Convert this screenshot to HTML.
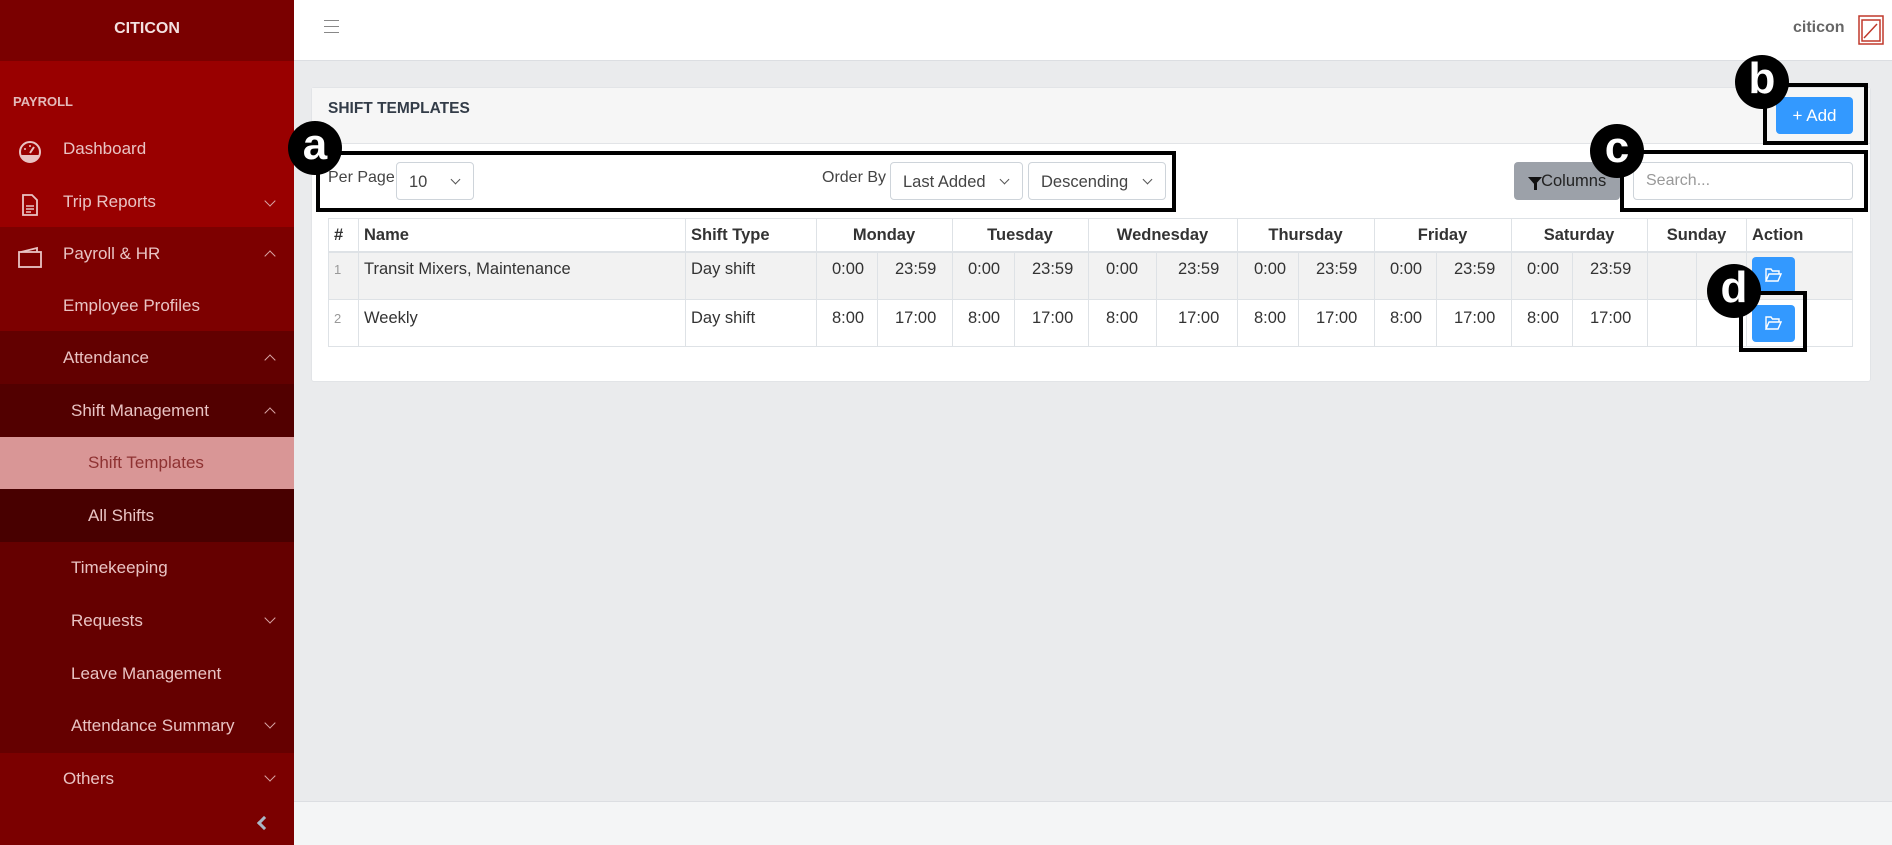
<!DOCTYPE html>
<html><head><meta charset="utf-8"><style>
*{box-sizing:border-box;margin:0;padding:0}
body{width:1892px;height:845px;overflow:hidden;background:#eaebed;font-family:"Liberation Sans",sans-serif;position:relative}
.abs{position:absolute}
#sb{left:0;top:0;width:294px;height:845px;background:#7b0000}
.band{position:absolute;left:0;width:294px}
.it{position:absolute;color:#e9c3c3;font-size:17px;line-height:20px;white-space:nowrap}
.chev{position:absolute;left:266px;width:8px;height:8px;border-left:1.3px solid #d9a6a6;border-bottom:1.3px solid #d9a6a6}
.dn{transform:rotate(-45deg)}
.up{transform:rotate(135deg)}
.th,.td{position:absolute;font-size:16.5px;color:#333;white-space:nowrap}
.th{font-weight:bold;color:#333}
.sel{position:absolute;border:1px solid #ced4da;border-radius:4px;background:#fff;font-size:16.5px;color:#444;padding:10px 12px;height:38px;line-height:18px}
.sel:after{content:"";position:absolute;right:14px;top:13px;width:6px;height:6px;border-right:1.4px solid #555;border-bottom:1.4px solid #555;transform:rotate(45deg)}
.box{position:absolute;border:4.5px solid #000}
.circ{position:absolute;width:54px;height:54px;border-radius:50%;background:#000;color:#fff;font-weight:bold;font-size:44px;line-height:48px;text-align:center}
.vl{position:absolute;width:1px;background:#dee2e6}
.hl{position:absolute;height:1px;background:#dee2e6}
.ab{position:absolute;width:43px;height:37px;background:#3399ff;border-radius:4px}
</style></head><body>
<div id="sb" class="abs">
 <div class="band" style="top:0;height:61px;background:#7a0000"></div>
 <div class="band" style="top:61px;height:166px;background:#990000"></div>
 <div class="band" style="top:227px;height:104px;background:#7d0000"></div>
 <div class="band" style="top:331px;height:53px;background:#620000"></div>
 <div class="band" style="top:384px;height:53px;background:#520000"></div>
 <div class="band" style="top:437px;height:52px;background:#d99696"></div>
 <div class="band" style="top:489px;height:53px;background:#480000"></div>
 <div class="band" style="top:542px;height:211px;background:#650000"></div>
 <div class="band" style="top:753px;height:92px;background:#7b0000"></div>
 <div class="it" style="left:0;width:294px;text-align:center;top:19px;font-weight:bold;color:#f3e0e0;font-size:16px">CITICON</div>
 <div class="it" style="left:13px;top:92px;font-weight:bold;font-size:13px;color:#e3baba">PAYROLL</div>
 <svg class="abs" style="left:18px;top:140px" width="24" height="24" viewBox="0 0 24 24"><circle cx="12" cy="12" r="10" fill="none" stroke="#e9c3c3" stroke-width="2"/><path d="M3 15h18v1a10 10 0 0 1-18 0z" fill="#e9c3c3"/><path d="M12 13l4-6" stroke="#e9c3c3" stroke-width="2"/><circle cx="7" cy="9" r="1" fill="#e9c3c3"/><circle cx="12" cy="6" r="1" fill="#e9c3c3"/></svg>
 <div class="it" style="left:63px;top:139px">Dashboard</div>
 <svg class="abs" style="left:21px;top:193px" width="18" height="24" viewBox="0 0 18 24"><path d="M2 2h9l5 5v15H2z" fill="none" stroke="#e9c3c3" stroke-width="1.8"/><path d="M5 13h8M5 16h8M5 19h5" stroke="#e9c3c3" stroke-width="1.5"/></svg>
 <div class="it" style="left:63px;top:192px">Trip Reports</div><div class="chev dn" style="top:197px"></div>
 <svg class="abs" style="left:18px;top:246px" width="24" height="22" viewBox="0 0 24 22"><rect x="1" y="6" width="22" height="15" fill="none" stroke="#e9c3c3" stroke-width="1.8"/><path d="M3 6l16-4v4" fill="none" stroke="#e9c3c3" stroke-width="1.8"/></svg>
 <div class="it" style="left:63px;top:244px">Payroll &amp; HR</div><div class="chev up" style="top:252px"></div>
 <div class="it" style="left:63px;top:296px">Employee Profiles</div>
 <div class="it" style="left:63px;top:348px">Attendance</div><div class="chev up" style="top:356px"></div>
 <div class="it" style="left:71px;top:401px">Shift Management</div><div class="chev up" style="top:409px"></div>
 <div class="it" style="left:88px;top:453px;color:#8e3232">Shift Templates</div>
 <div class="it" style="left:88px;top:506px">All Shifts</div>
 <div class="it" style="left:71px;top:558px">Timekeeping</div>
 <div class="it" style="left:71px;top:611px">Requests</div><div class="chev dn" style="top:614px"></div>
 <div class="it" style="left:71px;top:664px">Leave Management</div>
 <div class="it" style="left:71px;top:716px">Attendance Summary</div><div class="chev dn" style="top:719px"></div>
 <div class="it" style="left:63px;top:769px">Others</div><div class="chev dn" style="top:772px"></div>
 <div class="abs" style="left:259px;top:818px;width:10px;height:10px;border-left:3px solid #a9b7c6;border-bottom:3px solid #a9b7c6;transform:rotate(45deg)"></div>
</div>
<div class="abs" style="left:294px;top:0;width:1598px;height:61px;background:#fff;border-bottom:1px solid #dcdee2"></div>
<div class="abs" style="left:324px;top:20px;width:15px;height:13px;border-top:1.5px solid #888;border-bottom:1.5px solid #888"><div style="margin-top:4.5px;height:1.5px;background:#888"></div></div>
<div class="abs" style="left:1793px;top:19px;font-weight:bold;font-size:16px;color:#666">citicon</div>
<svg class="abs" style="left:1858px;top:15px" width="26" height="30" viewBox="0 0 26 30"><rect x="1" y="1" width="24" height="28" fill="none" stroke="#c0392b" stroke-width="1.5"/><rect x="4" y="5" width="18" height="21" fill="none" stroke="#c0392b" stroke-width="1.5"/><path d="M6 23L19 9" stroke="#c0392b" stroke-width="1.5"/></svg>
<div class="abs" style="left:294px;top:801px;width:1598px;height:44px;background:#f4f5f6;border-top:1px solid #dcdee2"></div>

<div class="abs" style="left:311px;top:87px;width:1560px;height:295px;background:#fff;border:1px solid #e2e4e7;border-radius:3px"></div>
<div class="abs" style="left:312px;top:88px;width:1558px;height:56px;background:#f6f6f6;border-bottom:1px solid #e2e4e7"></div>
<div class="abs" style="left:328px;top:100px;font-weight:bold;font-size:15.5px;color:#333c48">SHIFT TEMPLATES</div>
<div class="abs" style="left:1776px;top:97px;width:77px;height:37px;background:#3399ff;border-radius:4px;color:#fff;font-size:17px;line-height:37px;text-align:center">+ Add</div>

<div class="abs" style="left:328px;top:169px;font-size:16px;color:#444">Per Page</div>
<div class="sel" style="left:396px;top:162px;width:78px">10</div>
<div class="abs" style="left:822px;top:169px;font-size:16px;color:#444">Order By</div>
<div class="sel" style="left:890px;top:162px;width:133px">Last Added</div>
<div class="sel" style="left:1028px;top:162px;width:138px">Descending</div>
<div class="abs" style="left:1514px;top:162px;width:106px;height:38px;background:#9ca1a9;border-radius:4px;color:#222;font-size:16.5px;line-height:38px;padding-left:14px"><span style="display:inline-block;width:0;height:0;border-left:7px solid transparent;border-right:7px solid transparent;border-top:8px solid #111;vertical-align:1px"></span><span style="display:inline-block;width:3px;height:7px;background:#111;margin-left:-8.5px;vertical-align:-4px"></span> Columns</div>
<div class="abs" style="left:1633px;top:162px;width:220px;height:38px;border:1px solid #ced4da;border-radius:4px;color:#999;font-size:16px;line-height:36px;padding-left:12px">Search...</div>

<!-- table -->
<div class="abs" style="left:328px;top:218px;width:1525px;height:129px;border:1px solid #dee2e6"></div>
<div class="abs" style="left:329px;top:251px;width:1523px;height:48px;background:#f2f2f2"></div>
<div class="hl" style="left:328px;top:251px;width:1525px;height:2px"></div>
<div class="hl" style="left:328px;top:299px;width:1525px"></div>
<div class="vl" style="left:358px;top:218px;height:129px"></div>
<div class="vl" style="left:685px;top:218px;height:129px"></div>
<div class="vl" style="left:816px;top:218px;height:129px"></div>
<div class="vl" style="left:952px;top:218px;height:129px"></div>
<div class="vl" style="left:1088px;top:218px;height:129px"></div>
<div class="vl" style="left:1237px;top:218px;height:129px"></div>
<div class="vl" style="left:1374px;top:218px;height:129px"></div>
<div class="vl" style="left:1511px;top:218px;height:129px"></div>
<div class="vl" style="left:1647px;top:218px;height:129px"></div>
<div class="vl" style="left:1746px;top:218px;height:129px"></div>
<div class="vl" style="left:877px;top:251px;height:96px"></div>
<div class="vl" style="left:1014px;top:251px;height:96px"></div>
<div class="vl" style="left:1156px;top:251px;height:96px"></div>
<div class="vl" style="left:1298px;top:251px;height:96px"></div>
<div class="vl" style="left:1436px;top:251px;height:96px"></div>
<div class="vl" style="left:1572px;top:251px;height:96px"></div>
<div class="vl" style="left:1696px;top:251px;height:96px"></div>

<div class="th" style="left:334px;top:226px">#</div>
<div class="th" style="left:364px;top:226px">Name</div>
<div class="th" style="left:691px;top:226px">Shift Type</div>
<div class="th" style="left:816px;width:136px;text-align:center;top:226px">Monday</div>
<div class="th" style="left:952px;width:136px;text-align:center;top:226px">Tuesday</div>
<div class="th" style="left:1088px;width:149px;text-align:center;top:226px">Wednesday</div>
<div class="th" style="left:1237px;width:137px;text-align:center;top:226px">Thursday</div>
<div class="th" style="left:1374px;width:137px;text-align:center;top:226px">Friday</div>
<div class="th" style="left:1511px;width:136px;text-align:center;top:226px">Saturday</div>
<div class="th" style="left:1647px;width:99px;text-align:center;top:226px">Sunday</div>
<div class="th" style="left:1752px;top:226px">Action</div>

<div class="td" style="left:334px;top:262px;font-size:13px;color:#999">1</div>
<div class="td" style="left:364px;top:260px">Transit Mixers, Maintenance</div>
<div class="td" style="left:691px;top:260px">Day shift</div>
<div class="td" style="left:832px;top:260px">0:00</div><div class="td" style="left:895px;top:260px">23:59</div>
<div class="td" style="left:968px;top:260px">0:00</div><div class="td" style="left:1032px;top:260px">23:59</div>
<div class="td" style="left:1106px;top:260px">0:00</div><div class="td" style="left:1178px;top:260px">23:59</div>
<div class="td" style="left:1254px;top:260px">0:00</div><div class="td" style="left:1316px;top:260px">23:59</div>
<div class="td" style="left:1390px;top:260px">0:00</div><div class="td" style="left:1454px;top:260px">23:59</div>
<div class="td" style="left:1527px;top:260px">0:00</div><div class="td" style="left:1590px;top:260px">23:59</div>

<div class="td" style="left:334px;top:311px;font-size:13px;color:#999">2</div>
<div class="td" style="left:364px;top:309px">Weekly</div>
<div class="td" style="left:691px;top:309px">Day shift</div>
<div class="td" style="left:832px;top:309px">8:00</div><div class="td" style="left:895px;top:309px">17:00</div>
<div class="td" style="left:968px;top:309px">8:00</div><div class="td" style="left:1032px;top:309px">17:00</div>
<div class="td" style="left:1106px;top:309px">8:00</div><div class="td" style="left:1178px;top:309px">17:00</div>
<div class="td" style="left:1254px;top:309px">8:00</div><div class="td" style="left:1316px;top:309px">17:00</div>
<div class="td" style="left:1390px;top:309px">8:00</div><div class="td" style="left:1454px;top:309px">17:00</div>
<div class="td" style="left:1527px;top:309px">8:00</div><div class="td" style="left:1590px;top:309px">17:00</div>

<div class="ab" style="left:1752px;top:257px"></div>
<div class="ab" style="left:1752px;top:305px"></div>
<svg class="abs" style="left:1765px;top:268px" width="17" height="14" viewBox="0 0 17 14"><path d="M1 13V1h5l1.5 2H14v3M1 13l3-7h12l-3 7z" fill="none" stroke="#fff" stroke-width="1.4"/></svg>
<svg class="abs" style="left:1765px;top:316px" width="17" height="14" viewBox="0 0 17 14"><path d="M1 13V1h5l1.5 2H14v3M1 13l3-7h12l-3 7z" fill="none" stroke="#fff" stroke-width="1.4"/></svg>

<!-- annotations -->
<div class="box" style="left:316px;top:151px;width:860px;height:61px"></div>
<div class="box" style="left:1763px;top:83px;width:105px;height:62px"></div>
<div class="box" style="left:1620px;top:150px;width:248px;height:62px"></div>
<div class="box" style="left:1739px;top:291px;width:68px;height:61px"></div>
<div class="circ" style="left:288px;top:121px">a</div>
<div class="circ" style="left:1735px;top:55px">b</div>
<div class="circ" style="left:1590px;top:124px">c</div>
<div class="circ" style="left:1707px;top:264px">d</div>
</body></html>
